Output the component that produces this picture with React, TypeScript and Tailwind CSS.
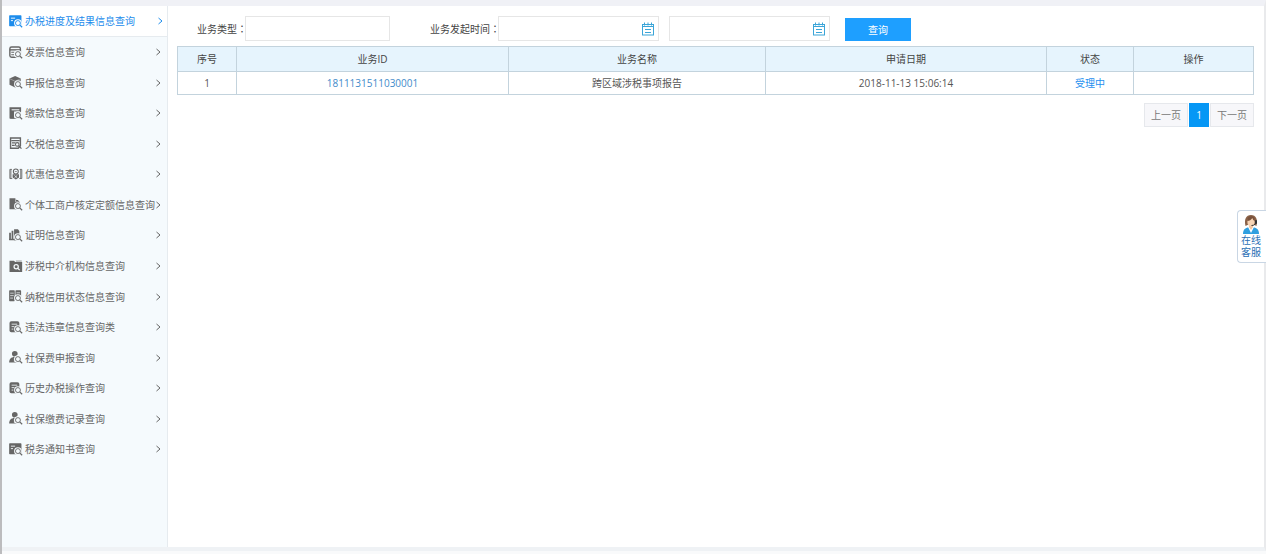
import type { ReactNode } from 'react';

type IconKind =
  | 'card'
  | 'ledger'
  | 'cube'
  | 'payment'
  | 'arrears'
  | 'benefit'
  | 'files'
  | 'proof'
  | 'folder'
  | 'credit'
  | 'record'
  | 'person';

const menu: { label: string; icon: IconKind }[] = [
  { label: '办税进度及结果信息查询', icon: 'card' },
  { label: '发票信息查询', icon: 'ledger' },
  { label: '申报信息查询', icon: 'cube' },
  { label: '缴款信息查询', icon: 'payment' },
  { label: '欠税信息查询', icon: 'arrears' },
  { label: '优惠信息查询', icon: 'benefit' },
  { label: '个体工商户核定定额信息查询', icon: 'files' },
  { label: '证明信息查询', icon: 'proof' },
  { label: '涉税中介机构信息查询', icon: 'folder' },
  { label: '纳税信用状态信息查询', icon: 'credit' },
  { label: '违法违章信息查询类', icon: 'record' },
  { label: '社保费申报查询', icon: 'person' },
  { label: '历史办税操作查询', icon: 'record' },
  { label: '社保缴费记录查询', icon: 'person' },
  { label: '税务通知书查询', icon: 'card' },
];

function Lens({ paper }: { paper: string }) {
  return (
    <>
      <circle cx="25" cy="23" r="11" fill={paper} />
      <path d="M30 28l8 8" stroke={paper} strokeWidth="7" />
      <circle cx="25" cy="23" r="7" fill={paper} stroke="currentColor" strokeWidth="2.6" />
      <path d="M30 28l7 7" stroke="currentColor" strokeWidth="3.4" />
    </>
  );
}

function MenuIcon({ kind, paper }: { kind: IconKind; paper: string }) {
  const shapes: Record<IconKind, ReactNode> = {
    card: (
      <>
        <rect x="0" y="1" width="35" height="31" rx="2" fill="currentColor" />
        <path d="M5 9h12M5 16h6" stroke={paper} strokeWidth="2.6" />
        <Lens paper={paper} />
      </>
    ),
    ledger: (
      <>
        <rect x="2" y="3" width="30" height="29" rx="5" fill="none" stroke="currentColor" strokeWidth="4" />
        <path d="M2 11h30" stroke="currentColor" strokeWidth="4" />
        <path d="M6 18h9M6 25h8" stroke="currentColor" strokeWidth="3" />
        <Lens paper={paper} />
      </>
    ),
    cube: (
      <>
        <path d="M17 0l16 7v18l-16 8-16-8V7z" fill="currentColor" />
        <path d="M2 8l15 7 15-7" fill="none" stroke={paper} strokeWidth="1" />
        <Lens paper={paper} />
      </>
    ),
    payment: (
      <>
        <path d="M1 1h33v12H14v20H1z" fill="currentColor" />
        <path d="M7 8h22" stroke={paper} strokeWidth="3" />
        <path d="M32 10v22M3 32h30" stroke="currentColor" strokeWidth="3" />
        <Lens paper={paper} />
      </>
    ),
    arrears: (
      <>
        <path d="M4 3h28v22l-6 7H4z" fill={paper} stroke="currentColor" strokeWidth="4" />
        <path d="M6 10h24M8 17h10M8 24h8" stroke="currentColor" strokeWidth="3.5" />
        <circle cx="23" cy="21" r="5" fill={paper} stroke="currentColor" strokeWidth="3" />
        <path d="M27 25l8 8" stroke="currentColor" strokeWidth="3.5" />
      </>
    ),
    benefit: (
      <>
        <path d="M8 4H2v26h7M30 4h6v26h-7M5 4v26M33 4v26" fill="none" stroke="currentColor" strokeWidth="2.5" />
        <circle cx="19" cy="10" r="7" fill={paper} stroke="currentColor" strokeWidth="3" />
        <path d="M10 18h18v9l-9 6-9-6z" fill="currentColor" />
        <path d="M15 21l8 7M23 21l-8 7" stroke={paper} strokeWidth="2" />
        <path d="M16 10h6" stroke="currentColor" strokeWidth="2" />
      </>
    ),
    files: (
      <>
        <path d="M1 1h16l4 5v26H1z" fill="currentColor" />
        <path d="M17 6h8l5 6v20H17z" fill="currentColor" />
        <path d="M18 3v8h9" fill="none" stroke={paper} strokeWidth="1.5" />
        <Lens paper={paper} />
      </>
    ),
    proof: (
      <>
        <path d="M0 11h5v20H0zM7 5h5v26H7zM14 1h11l4 5v26H14z" fill="currentColor" />
        <path d="M0 30h28" stroke="currentColor" strokeWidth="4" />
        <Lens paper={paper} />
      </>
    ),
    folder: (
      <>
        <path d="M1 2h13l3 4h20v28H1z" fill="currentColor" />
        <path d="M19 3h17" stroke="currentColor" strokeWidth="2" />
        <circle cx="20" cy="19" r="6" fill="none" stroke={paper} strokeWidth="3.5" />
        <path d="M24 23l6 6" stroke={paper} strokeWidth="3.5" />
      </>
    ),
    credit: (
      <>
        <rect x="0" y="1" width="16" height="31" rx="2" fill="currentColor" />
        <rect x="18" y="1" width="16" height="21" rx="2" fill="currentColor" />
        <path d="M3 9h10M3 16h10M3 23h8M21 8h10" stroke={paper} strokeWidth="2" />
        <Lens paper={paper} />
      </>
    ),
    record: (
      <>
        <rect x="1" y="1" width="28" height="31" rx="5" fill="currentColor" />
        <path d="M7 9h16M7 16h8M7 23h5" stroke={paper} strokeWidth="2.4" />
        <Lens paper={paper} />
      </>
    ),
    person: (
      <>
        <circle cx="16" cy="8" r="8" fill="currentColor" />
        <path d="M0 33c0-10 5-16 16-16s15 6 15 16z" fill="currentColor" />
        <path d="M15 20v11" stroke={paper} strokeWidth="2" />
        <Lens paper={paper} />
      </>
    ),
  };
  return (
    <svg viewBox="0 0 39 37" className="h-[13px] w-3.5 shrink-0" aria-hidden="true">
      {shapes[kind]}
    </svg>
  );
}

function Chevron() {
  return (
    <svg viewBox="0 0 5 8" className="h-2 w-[5px] shrink-0" fill="none" stroke="currentColor" aria-hidden="true">
      <path d="M0.5 1l3.500 3-3.500 3" />
    </svg>
  );
}

function CalendarIcon() {
  return (
    <svg viewBox="0 0 12 14" className="h-3.5 w-3" fill="none" stroke="#3ba5d8" aria-hidden="true">
      <rect x="0.5" y="2.5" width="11" height="10.5" />
      <path d="M0.500 4.500h11M3 7.500h6M3 10.500h6" />
      <path d="M2.500 0.500v3M6 0.500v3M9.500 0.500v3" />
    </svg>
  );
}

function DateField({ id, label }: { id: string; label: string }) {
  return (
    <div className="flex h-[25px] w-[161px] items-center border border-[#e6e6e6] bg-white pr-1">
      <input id={id} type="text" aria-label={label} className="h-full min-w-0 flex-1 px-1 outline-none" />
      <button type="button" aria-label="选择日期">
        <CalendarIcon />
      </button>
    </div>
  );
}

function AgentIcon() {
  return (
    <svg viewBox="0 0 18 20" className="h-5 w-[18px]" aria-hidden="true">
      <path d="M1 20c0-5 3-7 8-7s8 2 8 7z" fill="#2f9fe0" />
      <path d="M6 13l3 6 3-6z" fill="#fff" />
      <path d="M7 10h4v3l-2 3-2-3z" fill="#f2c6a0" />
      <path d="M3.500 12C2 5 4 1 9 1s7 4 5.500 11l-2-1H5.500z" fill="#8a6248" />
      <ellipse cx="9" cy="8" rx="3.6" ry="4.4" fill="#f8d5b5" />
      <path d="M5.300 7c2 0 4-1 5-3 .5 1.500 1.300 2.500 2.500 3C13 3.500 11.500 2.300 9 2.300S5.200 4 5.300 7z" fill="#7a523c" />
      <path d="M14 7c0 3-1.500 4.500-4.500 4.500" fill="none" stroke="#333" />
      <rect x="13" y="6" width="2" height="4" rx="1" fill="#333" />
    </svg>
  );
}

const columns = [
  { title: '序号', width: 'w-[59px]' },
  { title: '业务ID', width: 'w-[272px]' },
  { title: '业务名称', width: 'w-[257px]' },
  { title: '申请日期', width: 'w-[281px]' },
  { title: '状态', width: 'w-[87px]' },
  { title: '操作', width: 'w-[120px]' },
];

const cell = 'border border-[#c3d3dd] text-center font-normal';

function Colon() {
  return <span className="font-['Noto_Sans_CJK_TC',sans-serif]">：</span>;
}

export default function App() {
  return (
    <div className="flex min-h-screen flex-col border-l-2 border-[#bcbcbe] bg-[#f9fafb] font-['Open_Sans','Noto_Sans_CJK_SC',sans-serif] text-[10px] leading-4 text-[#555]">
      <div className="flex flex-1 border-t-[6px] border-r-2 border-b-4 border-t-[#f0f1f6] border-r-[#e9eaec] border-b-[#eff2f5] bg-white">
        <aside className="w-[166px] shrink-0 border-r border-[#e6ebef] bg-[#f5fafd]">
          <nav className="grid h-[458px] auto-rows-fr">
            {menu.map((item, i) => (
              <a
                key={item.label}
                href="#"
                className={
                  i === 0
                    ? 'flex items-center border-b border-[#e6ebef] bg-white pt-px pr-1 pl-[7px] text-[#1c8cec]'
                    : 'flex items-center pt-px pr-1.5 pl-[7px] text-[#666]'
                }
              >
                <MenuIcon kind={item.icon} paper={i === 0 ? '#ffffff' : '#f5fafd'} />
                <span className="flex-1 pl-0.5 whitespace-nowrap">{item.label}</span>
                <Chevron />
              </a>
            ))}
          </nav>
        </aside>

        <main className="min-w-0 flex-1 pt-2.5 pr-2.5 pl-[9px]">
          <form className="flex items-center pl-5 text-[#444]" onSubmit={(e) => e.preventDefault()}>
            <label htmlFor="type" className="w-12 whitespace-nowrap">
              业务类型
              <Colon />
            </label>
            <input
              id="type"
              type="text"
              className="h-[25px] w-[145px] border border-[#e6e6e6] bg-white px-1 outline-none"
            />
            <label htmlFor="from" className="ml-10 w-[68px] whitespace-nowrap">
              业务发起时间
              <Colon />
            </label>
            <DateField id="from" label="业务发起时间起" />
            <div className="ml-2.5">
              <DateField id="to" label="业务发起时间止" />
            </div>
            <button type="submit" className="ml-[15px] h-[23px] w-[66px] self-end bg-[#1e9fff] text-white">
              查询
            </button>
          </form>

          <table className="mt-[5px] w-full table-fixed border-collapse">
            <thead>
              <tr className="h-[25px] bg-[#e6f4fd] text-[#444]">
                {columns.map((c) => (
                  <th key={c.title} className={`${cell} ${c.width}`}>
                    {c.title}
                  </th>
                ))}
              </tr>
            </thead>
            <tbody>
              <tr className="h-[23px]">
                <td className={cell}>1</td>
                <td className={cell}>
                  <a href="#" className="text-[#428bca]">
                    1811131511030001
                  </a>
                </td>
                <td className={cell}>跨区域涉税事项报告</td>
                <td className={cell}>2018-11-13 15:06:14</td>
                <td className={cell}>
                  <a href="#" className="text-[#1e8fef]">
                    受理中
                  </a>
                </td>
                <td className={cell}></td>
              </tr>
            </tbody>
          </table>

          <div className="mt-2 flex justify-end gap-px">
            <button type="button" className="h-6 w-11 border border-[#e6e8ec] bg-[#f7f7fa] text-[#777]">
              上一页
            </button>
            <button type="button" aria-current="page" className="h-6 w-5 bg-[#0697f5] text-white">
              1
            </button>
            <button type="button" className="h-6 w-11 border border-[#e6e8ec] bg-[#f7f7fa] text-[#777]">
              下一页
            </button>
          </div>
        </main>
      </div>
      <div className="h-[3px]"></div>

      <button
        type="button"
        className="fixed top-[210px] right-0 flex w-[29px] flex-col items-center rounded-l border border-r-0 border-[#c9d6e4] bg-white pt-[3px] pr-0.5 pb-1 leading-3 text-[#2a6fb5]"
      >
        <AgentIcon />
        <span>在线</span>
        <span>客服</span>
      </button>
    </div>
  );
}
